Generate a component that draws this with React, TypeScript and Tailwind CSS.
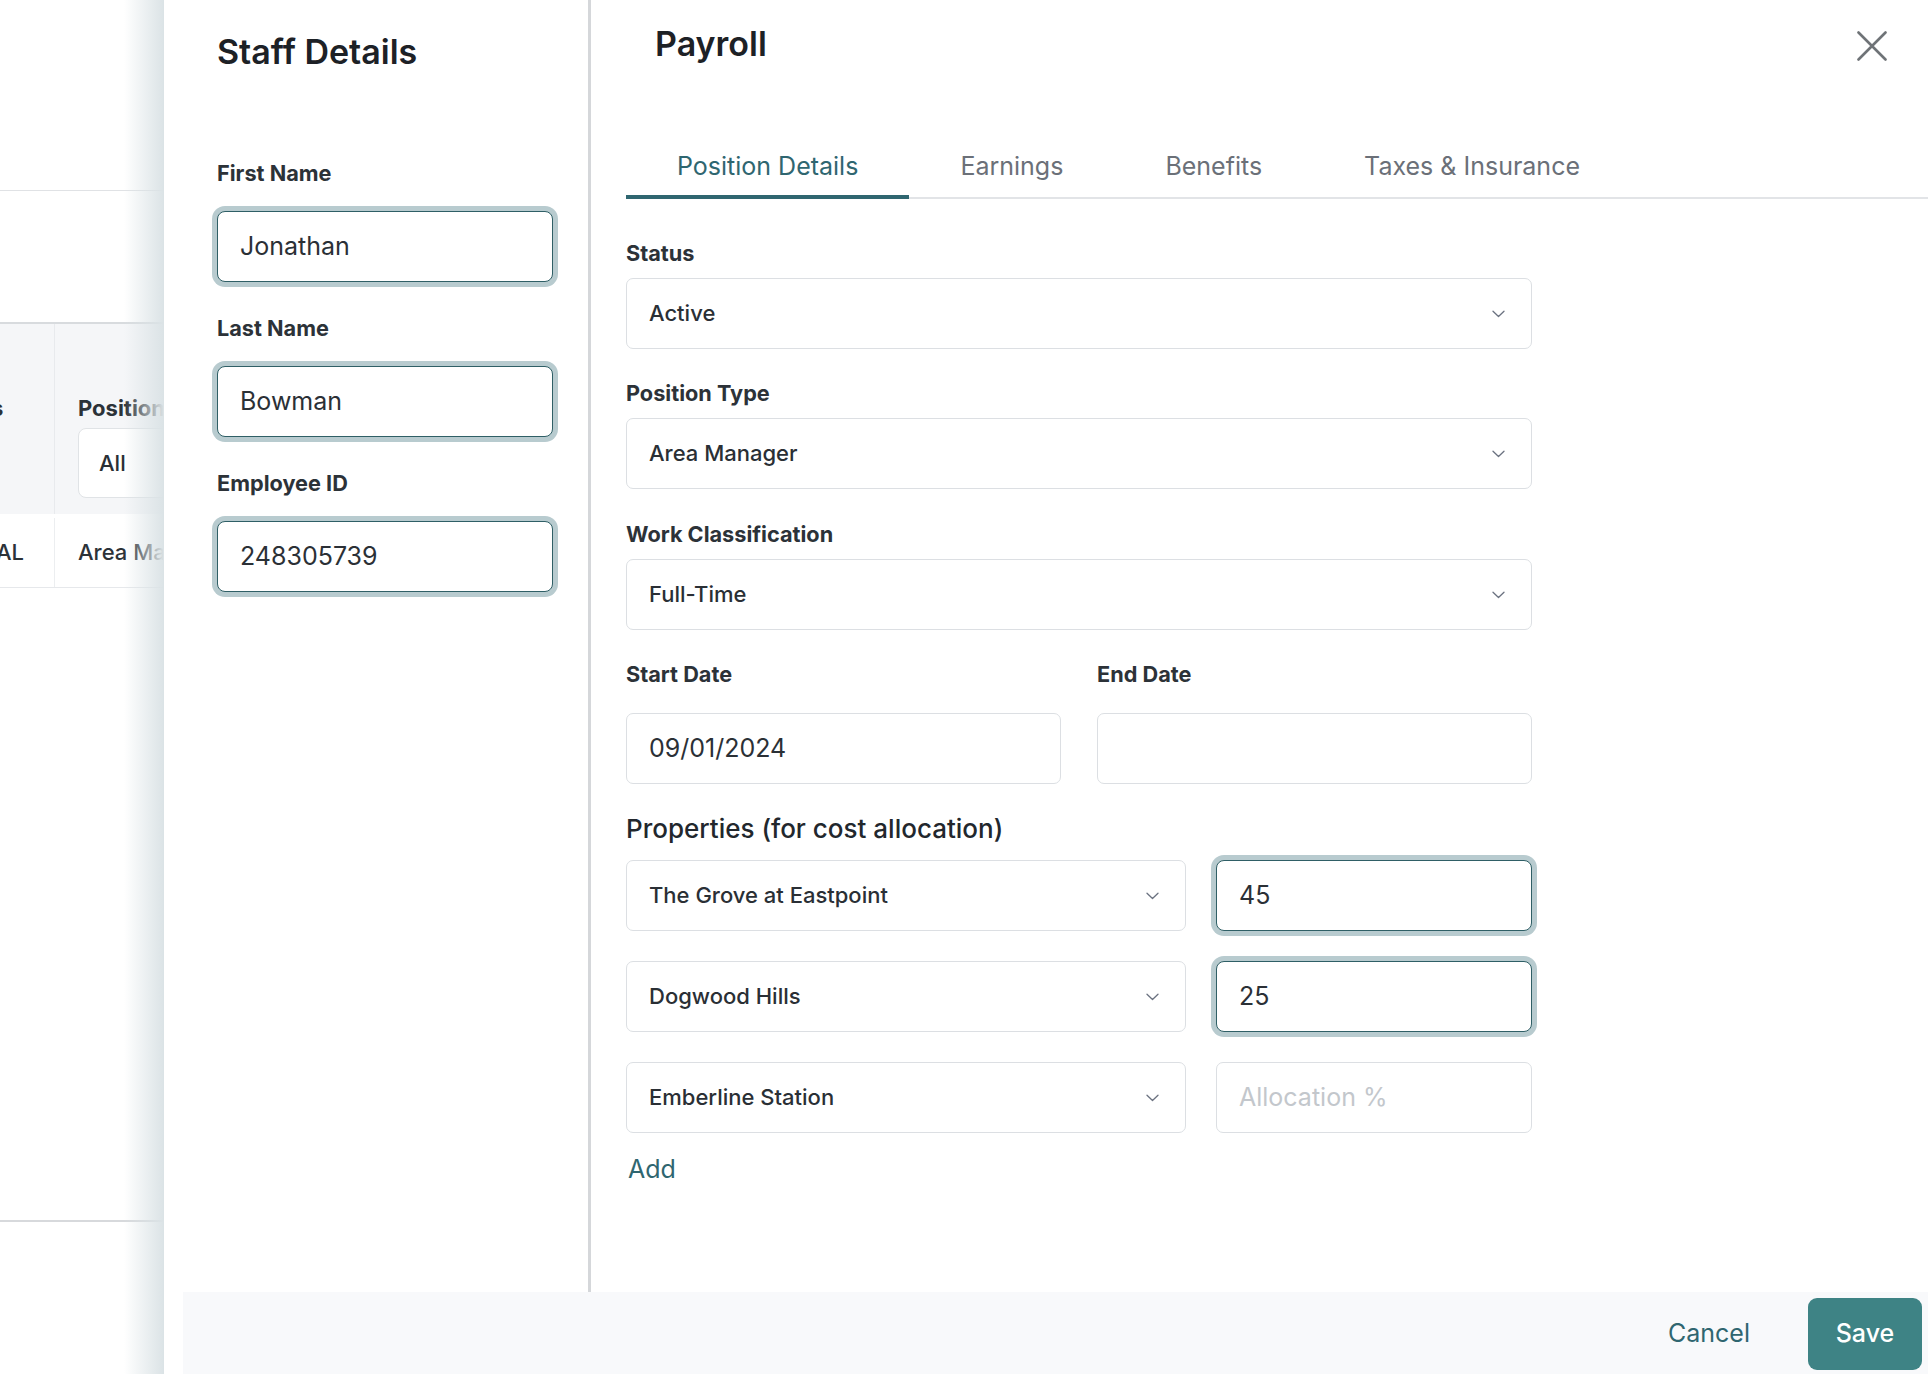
import React from "react";

function Chevron() {
  return (
    <svg width="13" height="8" viewBox="0 0 13 8" fill="none" className="shrink-0">
      <path d="M1 1.2l5.5 5.3 5.5-5.3" stroke="#6b7280" strokeWidth="1.3" strokeLinecap="round" strokeLinejoin="round" />
    </svg>
  );
}

function SelectBox({ value, className = "" }: { value: string; className?: string }) {
  return (
    <div
      className={`flex h-[71px] items-center justify-between rounded-[7px] border-[1.5px] border-[#dcdfe3] bg-white pl-[22px] pr-[26px] ${className}`}
    >
      <span className="text-[22px] font-medium text-[#2a2f35]">{value}</span>
      <Chevron />
    </div>
  );
}

function FocusInput({ value, className = "" }: { value: string; className?: string }) {
  return (
    <div
      className={`flex h-[71px] items-center rounded-[8px] border-[1.5px] border-[#2f5f66] bg-white pl-[22px] shadow-[0_0_0_5px_#b8cbcf] ${className}`}
    >
      <span className="text-[25px] text-[#2b3036]">{value}</span>
    </div>
  );
}

function PlainInput({ value, placeholder, className = "" }: { value?: string; placeholder?: string; className?: string }) {
  return (
    <div
      className={`flex h-[71px] items-center rounded-[7px] border-[1.5px] border-[#dcdfe3] bg-white pl-[22px] ${className}`}
    >
      {value ? (
        <span className="text-[25px] text-[#2b3036]">{value}</span>
      ) : (
        <span className="text-[25px] text-[#c3c7cc]">{placeholder}</span>
      )}
    </div>
  );
}

function Label({ children, className = "" }: { children: React.ReactNode; className?: string }) {
  return <div className={`text-[21.7px] font-bold leading-[28px] text-[#2c3238] ${className}`}>{children}</div>;
}

export default function App() {
  const tabs = ["Position Details", "Earnings", "Benefits", "Taxes & Insurance"];
  return (
    <div className="relative h-[1374px] w-full overflow-hidden bg-white font-['Inter',sans-serif]">
      {/* background page */}
      <div className="w-full">
        <div className="h-[191px] border-b-[1.5px] border-[#e0e2e5]" />
        <div className="h-[131px]" />
        <div className="flex h-[192px] border-t-2 border-[#d8dbde] bg-[#f5f6f8]">
          <div className="flex w-[55px] shrink-0 items-start overflow-hidden border-r border-[#e8eaed] pt-[70px]">
            <span className="-ml-[9px] text-[22px] font-bold leading-[28px] text-[#2c3238]">s</span>
          </div>
          <div className="flex-1 pl-[23px] pt-[70px]">
            <div className="text-[22px] font-bold leading-[28px] text-[#2c3238]">Position</div>
            <div className="mt-[6px] flex h-[70px] w-[200px] items-center rounded-[8px] border-[1.5px] border-[#e0e3e6] bg-white pl-[20px]">
              <span className="text-[22px] font-medium text-[#2a2f35]">All</span>
            </div>
          </div>
        </div>
        <div className="flex h-[74px] border-b-[1.5px] border-[#e6e8eb] pt-[4px]">
          <div className="flex w-[55px] shrink-0 items-center overflow-hidden border-r border-[#eceef0]">
            <span className="-ml-[4px] text-[22px] font-medium text-[#2c3238]">AL</span>
          </div>
          <div className="flex flex-1 items-center pl-[23px]">
            <span className="whitespace-nowrap text-[22px] font-medium text-[#2c3238]">Area Manager</span>
          </div>
        </div>
        <div className="h-[634px] border-b-2 border-[#d7d9dc]" />
      </div>

      {/* drawer */}
      <div className="absolute right-0 top-0 flex h-full w-[1765px] flex-col border-l border-[#c9d5d8] bg-white">
        <div className="pointer-events-none absolute -left-[40px] top-0 h-full w-[40px] bg-gradient-to-r from-transparent to-[#dbe3e6]" />
        <div className="flex min-h-0 flex-1">
          {/* Staff details */}
          <div className="w-[427px] shrink-0 border-r-[3px] border-[#d5d7da] pl-[53px] pr-[35px] pt-[30px]">
            <h1 className="text-[34px] font-semibold leading-[44px] text-[#1d2126]">Staff Details</h1>
            <Label className="mt-[85px]">First Name</Label>
            <FocusInput value="Jonathan" className="mt-[24px]" />
            <Label className="mt-[32px]">Last Name</Label>
            <FocusInput value="Bowman" className="mt-[24px]" />
            <Label className="mt-[32px]">Employee ID</Label>
            <FocusInput value="248305739" className="mt-[24px]" />
          </div>

          {/* Payroll */}
          <div className="min-w-0 flex-1 pl-[35px]">
            <div className="flex items-center justify-between pt-[22px]">
              <h2 className="pl-[29px] text-[34px] font-semibold leading-[44px] text-[#1d2126]">Payroll</h2>
              <button className="mr-[41px] mt-[4px] flex h-[30px] w-[30px] items-center justify-center">
                <svg width="30" height="30" viewBox="0 0 30 30" fill="none">
                  <path d="M1.5 1.5l27 27M28.5 1.5l-27 27" stroke="#6f7377" strokeWidth="2.6" strokeLinecap="round" />
                </svg>
              </button>
            </div>

            <div className="mt-[84px] flex border-b-2 border-[#e2e4e7]">
              {tabs.map((t, i) => (
                <div
                  key={t}
                  className={`-mb-[2px] border-b-4 px-[51px] pb-[13px] text-[25px] leading-[32px] ${
                    i === 0 ? "border-[#2f6670] text-[#2f6670]" : "border-transparent text-[#6b7078]"
                  }`}
                >
                  {t}
                </div>
              ))}
            </div>

            <div className="w-[906px]">
              <Label className="mt-[40px]">Status</Label>
              <SelectBox value="Active" className="mt-[11px]" />
              <Label className="mt-[30px]">Position Type</Label>
              <SelectBox value="Area Manager" className="mt-[11px]" />
              <Label className="mt-[31px]">Work Classification</Label>
              <SelectBox value="Full-Time" className="mt-[11px]" />

              <div className="mt-[30px] grid grid-cols-2 gap-x-[36px]">
                <div>
                  <Label>Start Date</Label>
                  <PlainInput value="09/01/2024" className="mt-[25px]" />
                </div>
                <div>
                  <Label>End Date</Label>
                  <PlainInput className="mt-[25px]" />
                </div>
              </div>

              <div className="mt-[29px] text-[26px] font-medium leading-[32px] text-[#22272d]">
                Properties (for cost allocation)
              </div>
              <div className="mt-[15px] flex flex-col gap-[30px]">
                <div className="flex gap-[30px]">
                  <SelectBox value="The Grove at Eastpoint" className="w-[560px]" />
                  <FocusInput value="45" className="flex-1" />
                </div>
                <div className="flex gap-[30px]">
                  <SelectBox value="Dogwood Hills" className="w-[560px]" />
                  <FocusInput value="25" className="flex-1" />
                </div>
                <div className="flex gap-[30px]">
                  <SelectBox value="Emberline Station" className="w-[560px]" />
                  <PlainInput placeholder="Allocation %" className="flex-1" />
                </div>
              </div>
              <div className="mt-[20px] pl-[2px] text-[25px] leading-[32px] text-[#2f6670]">Add</div>
            </div>
          </div>
        </div>

        {/* footer */}
        <div className="ml-[19px] flex h-[82px] shrink-0 items-start justify-end gap-[58px] bg-[#f8f9fb] pr-[6px] pt-[6px]">
          <button className="flex h-[72px] items-center text-[25px] text-[#2f6670]">Cancel</button>
          <button className="flex h-[72px] w-[114px] items-center justify-center rounded-[9px] bg-[#3e8385] text-[25px] font-medium text-white">
            Save
          </button>
        </div>
      </div>
    </div>
  );
}
